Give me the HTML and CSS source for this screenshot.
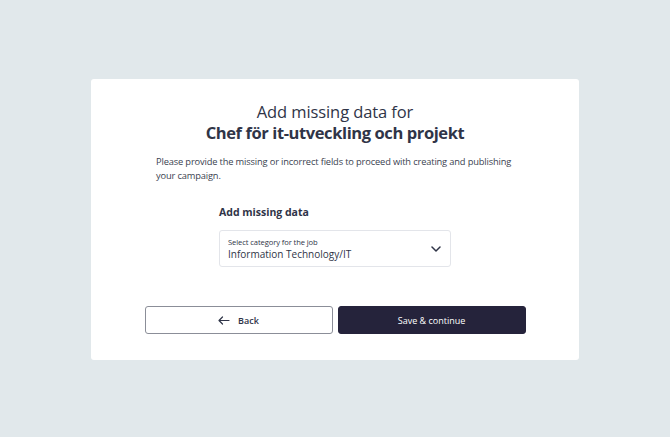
FILE: index.html
```html
<!DOCTYPE html>
<html lang="en">
<head>
  <meta charset="UTF-8" />
  <meta name="viewport" content="width=device-width, initial-scale=1.0"/>
  <title>Add missing data</title>
  <link rel="stylesheet" href="styles.css">
</head>
<body>
  <div class="card">
    <h1>Add missing data for<br><strong>Chef för it-utveckling och projekt</strong></h1>
    <p class="intro">Please provide the missing or incorrect fields to proceed with creating and publishing your campaign.</p>

    <div class="field-group">
      <h2>Add missing data</h2>
      <div class="select">
        <div class="select-text">
          <span class="select-label">Select category for the job</span>
          <span class="select-value">Information Technology/IT</span>
        </div>
        <svg class="chevron" width="10" height="6" viewBox="0 0 10 6" fill="none">
          <path d="M1 1l4 4 4-4" stroke="#2f3447" stroke-width="1.5" stroke-linecap="round" stroke-linejoin="round"/>
        </svg>
      </div>
    </div>

    <div class="actions">
      <button class="btn btn-back">
        <svg width="12" height="9" viewBox="0 0 12 9" fill="none">
          <path d="M11 4.5H1.5M4.5 1L1 4.5 4.5 8" stroke="#2f3447" stroke-width="1.2" stroke-linecap="round" stroke-linejoin="round"/>
        </svg>
        Back
      </button>
      <button class="btn btn-save">Save &amp; continue</button>
    </div>
  </div>
</body>
</html>
```

FILE: styles.css
```css
body {
  font-family: "Open Sans", "Noto Sans", sans-serif;
  background-color: #e1e8eb;
  margin: 0;
  padding: 79px 0 0;
  color: #2f3447;
}
.card {
  background: white;
  border-radius: 3px;
  width: 488px;
  height: 281px;
  margin: 0 auto;
  padding: 22px 0 0;
  box-sizing: border-box;
}
h1 {
  text-align: center;
  font-size: 16.5px;
  font-weight: 500;
  line-height: 21px;
  letter-spacing: -0.1px;
  margin: 0;
}
h1 strong {
  font-weight: 700;
  letter-spacing: -0.4px;
}
.intro {
  font-size: 9.3px;
  line-height: 14px;
  letter-spacing: -0.15px;
  color: #3a3f50;
  margin: 12px 60px 0 65px;
}
.field-group {
  width: 232px;
  margin: 22px auto 0;
}
h2 {
  font-size: 10.5px;
  font-weight: 700;
  margin: 0 0 11px;
}
.select {
  display: flex;
  align-items: center;
  justify-content: space-between;
  height: 37px;
  border: 1px solid #e3e5ea;
  border-radius: 3px;
  padding: 0 9px 0 8px;
  box-sizing: border-box;
}
.select-text {
  display: flex;
  flex-direction: column;
}
.select-label {
  font-size: 7.6px;
  line-height: 10px;
  letter-spacing: -0.1px;
}
.select-value {
  font-size: 10px;
  line-height: 14px;
}
.actions {
  display: flex;
  justify-content: center;
  gap: 5px;
  margin-top: 39px;
}
.btn {
  display: flex;
  align-items: center;
  justify-content: center;
  gap: 8px;
  width: 188px;
  height: 28px;
  border-radius: 3px;
  font-family: inherit;
  font-size: 9px;
  font-weight: 600;
  cursor: pointer;
}
.btn-back {
  background: white;
  border: 1px solid #8b8e98;
  color: #2f3447;
}
.btn-save {
  background: #25233b;
  border: 1px solid #25233b;
  color: white;
  font-weight: 500;
}
```
